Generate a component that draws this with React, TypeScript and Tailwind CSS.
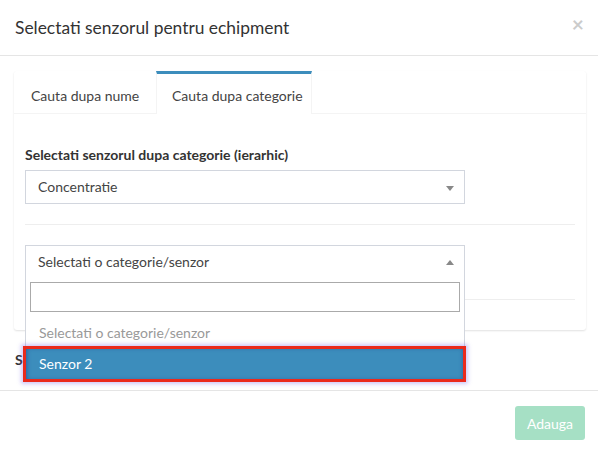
import React from "react"

function Arrow({ up = false }: { up?: boolean }) {
  return (
    <span
      className={
        up
          ? "absolute right-[10px] top-[14px] h-0 w-0 border-x-[4px] border-b-[5px] border-x-transparent border-b-[#888]"
          : "absolute right-[10px] top-[15px] h-0 w-0 border-x-[4px] border-t-[5px] border-x-transparent border-t-[#888]"
      }
    />
  )
}

function Select({ value, open = false }: { value: string; open?: boolean }) {
  return (
    <div className="relative w-[440px]">
      <div className="relative h-[34px] border border-[#d2d6de] bg-white pl-[12px] leading-[32px] text-[#444]">
        {value}
        <Arrow up={open} />
      </div>
      {open && (
        <div className="absolute left-0 top-[33px] z-10 w-full border border-t-0 border-[#d2d6de] bg-white">
          <div className="px-[4px] pt-[4px] pb-[3px]">
            <div className="h-[30px] border border-[#aaa] bg-white" />
          </div>
          <div className="px-[13px] pt-[8px] pb-[4px] leading-[20px] text-[#999]">Selectati o categorie/senzor</div>
          <div className="relative h-[34px] bg-[#3c8dbc] pl-[13px] leading-[34px] text-white shadow-[inset_0_0_5px_rgba(20,30,120,0.55)]">
            Senzor 2
            <span className="pointer-events-none absolute -left-[3px] -right-[2px] -top-[1px] -bottom-[1px] border-[3px] border-[#ea2a1c] shadow-[0_0_4px_2px_rgba(120,100,235,0.35)]" />
          </div>
        </div>
      )}
    </div>
  )
}

export default function App() {
  return (
    <div className="relative h-[455px] w-[598px] overflow-hidden bg-white font-['Lato',sans-serif] text-[14px] text-[#333]">
      <div className="flex h-[56px] items-center justify-between border-b border-[#e5e5e5] pl-[15px] pr-[14px]">
        <h4 className="text-[17.4px] leading-[26px] text-[#333]">Selectati senzorul pentru echipment</h4>
        <button className="-mt-[8px] text-[21px] font-bold leading-none text-black opacity-20">×</button>
      </div>

      <div className="pl-[14px] pr-[12px] pt-[15px] pb-[20px]">
        <div className="mb-[20px] rounded-[3px] bg-white shadow-[0_1px_2px_rgba(0,0,0,0.12)]">
          <div className="flex h-[43px] border-b border-[#f4f4f4]">
            <div className="w-[142px] border-t-[3px] border-transparent pl-[17px] pt-[12px] leading-[20px] text-[#444]">
              Cauta dupa nume
            </div>
            <div className="-mb-px w-[156px] border-x border-t-[3px] border-x-[#f4f4f4] border-t-[#3c8dbc] bg-white pl-[15px] pt-[12px] leading-[20px] text-[#444]">
              Cauta dupa categorie
            </div>
          </div>
          <div className="px-[11px] pt-[31px] pb-[30px]">
            <div className="mb-[5px] font-bold leading-[20px]">Selectati senzorul dupa categorie (ierarhic)</div>
            <Select value="Concentratie" />
            <hr className="my-[20px] border-[#eee]" />
            <Select value="Selectati o categorie/senzor" open />
            <hr className="mt-[20px] border-[#eee]" />
          </div>
        </div>
        <div className="pl-[1px] font-bold leading-[20px]">Senzor</div>
      </div>

      <div className="flex justify-end border-t border-[#e5e5e5] pr-[13px] pt-[15px]">
        <button className="h-[34px] w-[70px] rounded-[3px] bg-[#a6e0c5] text-[14px] text-white">Adauga</button>
      </div>
    </div>
  )
}
